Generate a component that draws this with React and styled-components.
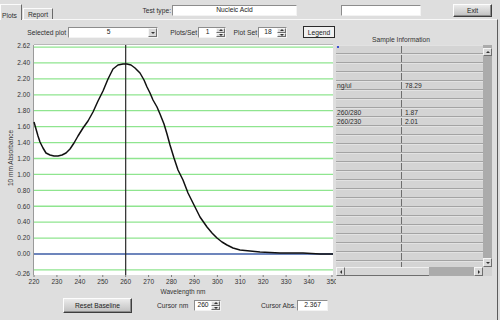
import React from 'react';
import styled, { createGlobalStyle } from 'styled-components';

const GlobalStyle = createGlobalStyle`
  html, body { margin: 0; padding: 0; background: #dedede; }
  body {
    font-family: "Liberation Sans", Arial, sans-serif;
    font-size: 6.7px;
    color: #2e2e2e;
  }
`;

const Window = styled.div`
  width: 500px;
  height: 320px;
  display: flex;
  flex-direction: column;
  overflow: hidden;
  background: #dedede;
`;

const TopBar = styled.div`
  height: 19px;
  flex-shrink: 0;
  display: flex;
  align-items: flex-start;
  position: relative;
  z-index: 1;
`;

const Tabs = styled.div`
  display: flex;
  align-items: flex-end;
  height: 20px;
`;

const Tab = styled.div`
  box-sizing: border-box;
  width: ${p => p.$w}px;
  height: ${p => (p.$active ? 16 : 11)}px;
  margin-bottom: ${p => (p.$active ? 0 : 1)}px;
  margin-left: ${p => (p.$active ? 0 : 1)}px;
  border: 1px solid;
  border-color: #fbfbfb #6a6a6a transparent #fbfbfb;
  border-bottom: none;
  background: #dedede;
  display: flex;
  align-items: center;
  justify-content: ${p => (p.$active ? 'flex-start' : 'center')};
  padding-top: ${p => (p.$active ? 5 : 1)}px;
  padding-left: ${p => (p.$active ? 1 : 0)}px;
`;

const Label = styled.span`
  display: inline-block;
  width: ${p => (p.$w ? `${p.$w}px` : 'auto')};
  text-align: ${p => p.$align || 'left'};
  margin-left: ${p => p.$ml || 0}px;
  margin-right: ${p => p.$mr || 0}px;
  margin-top: ${p => p.$mt || 0}px;
  white-space: nowrap;
  line-height: 11px;
`;

const Field = styled.div`
  box-sizing: border-box;
  width: ${p => p.$w}px;
  height: 11px;
  margin-left: ${p => p.$ml || 0}px;
  margin-top: ${p => p.$mt || 0}px;
  background: #fff;
  border: 1px solid;
  border-color: #8c8c8c #f3f3f3 #f3f3f3 #8c8c8c;
  display: flex;
  align-items: stretch;
  flex-shrink: 0;
`;

const FieldText = styled.span`
  flex: 1;
  display: flex;
  align-items: center;
  justify-content: ${p => p.$align || 'center'};
  padding-left: ${p => p.$pl || 0}px;
  line-height: 1;
  color: #222;
`;

const tri = {
  up: 'border-left:2px solid transparent;border-right:2px solid transparent;border-bottom:2px solid #333;',
  down: 'border-left:2px solid transparent;border-right:2px solid transparent;border-top:2px solid #333;',
  left: 'border-top:2px solid transparent;border-bottom:2px solid transparent;border-right:2px solid #333;',
  right: 'border-top:2px solid transparent;border-bottom:2px solid transparent;border-left:2px solid #333;',
};

const Tri = styled.span`
  width: 0;
  height: 0;
  ${p => tri[p.$dir]}
`;

const SmallBtn = styled.div`
  box-sizing: border-box;
  width: ${p => p.$w || 9}px;
  height: ${p => p.$h || '100%'};
  background: #d9d9d9;
  border: 1px solid;
  border-color: #f6f6f6 #6e6e6e #6e6e6e #f6f6f6;
  display: flex;
  align-items: center;
  justify-content: center;
  flex-shrink: 0;
`;

const SpinCol = styled.div`
  display: flex;
  flex-direction: column;
  width: 9px;
`;

const PushButton = styled.div`
  box-sizing: border-box;
  width: ${p => p.$w}px;
  height: ${p => p.$h}px;
  margin-left: ${p => p.$ml || 0}px;
  margin-top: ${p => p.$mt || 0}px;
  background: linear-gradient(#ebebeb, #c0c0c0);
  border: 1px solid;
  border-color: #fdfdfd #3e3e3e #3e3e3e #fdfdfd;
  box-shadow: inset -1px -1px 0 #8c8c8c;
  display: flex;
  align-items: center;
  justify-content: center;
  color: #222;
  flex-shrink: 0;
`;

const LegendButton = styled.div`
  box-sizing: border-box;
  width: 32px;
  height: 12px;
  margin-left: 16px;
  margin-top: -1px;
  border: 1px solid #2a2a2a;
  background: #f1f1f1;
  display: flex;
  align-items: center;
  justify-content: center;
  color: #222;
`;

const Panel = styled.div`
  flex: 1;
  width: 498px;
  box-sizing: border-box;
  border-top: 1px solid #f8f8f8;
  border-right: 1px solid #5c5c5c;
  display: flex;
  flex-direction: column;
`;

const ControlRow = styled.div`
  height: 18px;
  box-sizing: border-box;
  padding: 7px 0 0 26px;
  display: flex;
  align-items: flex-start;
`;

const Main = styled.div`
  height: 258px;
  display: flex;
`;

const Side = styled.div`
  width: 157px;
  display: flex;
  flex-direction: column;
`;

const SideHeader = styled.div`
  height: 7px;
  line-height: 4px;
  text-align: center;
  padding-right: 27px;
  color: #333;
`;

const Table = styled.div`
  display: grid;
  grid-template-columns: 147px 9px;
  grid-template-rows: 222px 9px;
`;

const Rows = styled.div`
  overflow: hidden;
  background: #d4d4d4;
  position: relative;
`;

const Row = styled.div`
  display: grid;
  grid-template-columns: 66px 81px;
  height: 9px;
  box-sizing: border-box;
  border-bottom: 1px solid #a3a3a3;
  border-top: 1px solid #e2e2e2;
`;

const Cell = styled.div`
  padding-left: ${p => p.$pl}px;
  line-height: 7px;
  border-right: ${p => (p.$divider ? '1px solid #6e6e6e' : 'none')};
  color: #2a2a2a;
  white-space: nowrap;
`;

const Marker = styled.span`
  position: absolute;
  left: 1px;
  top: 1px;
  width: 2px;
  height: 2px;
  background: #3b4fd0;
`;

const VScroll = styled.div`
  background: #ababab;
  display: flex;
  flex-direction: column;
  justify-content: space-between;
  padding-top: 3px;
`;

const HScroll = styled.div`
  display: grid;
  grid-template-columns: 9px 84px 1fr 9px;
  background: #ababab;
`;

const Thumb = styled.div`
  background: #d6d6d6;
  border-bottom: 1px solid #6e6e6e;
  border-top: 1px solid #f0f0f0;
  box-sizing: border-box;
`;

const Corner = styled.div`
  background: #d2d2d2;
`;

const BottomRow = styled.div`
  height: 24px;
  box-sizing: border-box;
  padding-top: 2px;
  display: flex;
  align-items: flex-start;
`;

const PX = 34;
const PR = 333;
const TOP = 7;
const BOT = 237;
const xOf = nm => PX + (nm - 220) * 2.292;
const yOf = v => 216 - v * 79.6;

// absorbance trace, in chart pixels
const trace = [
  [34, 84], [36, 91], [38, 98], [40, 104], [43, 110], [46, 115], [50, 117], [54, 118],
  [58, 118], [62, 117], [66, 115], [70, 111], [74, 105], [78, 98], [83, 90], [88, 83],
  [93, 74], [98, 63], [103, 53], [108, 41], [113, 31], [118, 27], [123, 26], [127, 26],
  [131, 27], [135, 30], [140, 35], [144, 42], [147, 49], [150, 55], [153, 62], [157, 69],
  [160, 76], [164, 86], [167, 96], [170, 107], [174, 120], [178, 132], [183, 142],
  [188, 155], [193, 165], [200, 179], [207, 189], [212, 195], [217, 200], [222, 204],
  [227, 207], [233, 210], [240, 212], [250, 213], [260, 214], [280, 215], [303, 215],
  [320, 216], [333, 216],
];

const gridValues = [2.6, 2.4, 2.2, 2.0, 1.8, 1.6, 1.4, 1.2, 1.0, 0.8, 0.6, 0.4, 0.2, -0.2];
const yLabels = [
  ['2.62', TOP + 1], ['2.40', yOf(2.4)], ['2.20', yOf(2.2)], ['2.00', yOf(2.0)],
  ['1.80', yOf(1.8)], ['1.60', yOf(1.6)], ['1.40', yOf(1.4)], ['1.20', yOf(1.2)],
  ['1.00', yOf(1.0)], ['0.80', yOf(0.8)], ['0.60', yOf(0.6)], ['0.40', yOf(0.4)],
  ['0.20', yOf(0.2)], ['0.00', yOf(0)], ['-0.26', BOT - 1],
];
const xTicks = Array.from({ length: 14 }, (_, i) => 220 + i * 10);

function Chart() {
  return (
    <svg width="336" height="258" viewBox="0 0 336 258" style={{ display: 'block', flexShrink: 0 }}>
      <rect x={PX} y={TOP} width={PR - PX} height={BOT - TOP} fill="#fff" />
      <line x1={PX} y1={TOP - 0.5} x2={PR} y2={TOP - 0.5} stroke="#b8b8b8" />
      <line x1={PX - 0.5} y1={TOP} x2={PX - 0.5} y2={BOT} stroke="#9a9a9a" />
      {gridValues.map(v => (
        <line key={v} x1={PX} x2={PR} y1={yOf(v)} y2={yOf(v)} stroke="#8fe58f" strokeWidth="1.3" />
      ))}
      <line x1={PX} x2={PR} y1={yOf(0)} y2={yOf(0)} stroke="#3d5ca6" strokeWidth="1.3" />
      <line x1={xOf(260)} x2={xOf(260)} y1={TOP} y2={BOT} stroke="#2a2a2a" strokeWidth="1.2" />
      <polyline
        points={trace.map(p => p.join(',')).join(' ')}
        fill="none"
        stroke="#111"
        strokeWidth="1.5"
        strokeLinejoin="round"
      />
      <g fontFamily='"Liberation Sans", Arial, sans-serif' fontSize="6.5" fill="#333">
        {yLabels.map(([t, y]) => (
          <text key={t} x="30" y={y + 2.3} textAnchor="end">{t}</text>
        ))}
        {xTicks.map(nm => (
          <g key={nm}>
            <line x1={xOf(nm)} x2={xOf(nm)} y1={BOT} y2={BOT + 2} stroke="#555" strokeWidth="0.7" />
            <text x={xOf(nm)} y={BOT + 9} textAnchor="middle">{nm}</text>
          </g>
        ))}
        <text x="183" y="256" textAnchor="middle">Wavelength nm</text>
        <text x="13" y="120" textAnchor="middle" transform="rotate(-90 13 120)">10 mm Absorbance</text>
      </g>
    </svg>
  );
}

const sampleData = {
  4: ['ng/ul', '78.29'],
  7: ['260/280', '1.87'],
  8: ['260/230', '2.01'],
};

function SampleTable() {
  return (
    <Table>
      <Rows>
        {Array.from({ length: 25 }, (_, i) => (
          <Row key={i}>
            <Cell $pl={1} $divider>{sampleData[i] ? sampleData[i][0] : ''}</Cell>
            <Cell $pl={3}>{sampleData[i] ? sampleData[i][1] : ''}</Cell>
          </Row>
        ))}
        <Marker />
      </Rows>
      <VScroll>
        <SmallBtn $h="8px"><Tri $dir="up" /></SmallBtn>
        <SmallBtn $h="9px"><Tri $dir="down" /></SmallBtn>
      </VScroll>
      <HScroll>
        <SmallBtn><Tri $dir="left" /></SmallBtn>
        <Thumb />
        <span />
        <SmallBtn><Tri $dir="right" /></SmallBtn>
      </HScroll>
      <Corner />
    </Table>
  );
}

function Spinner({ value, w, ml, mt }) {
  return (
    <Field $w={w} $ml={ml} $mt={mt}>
      <FieldText>{value}</FieldText>
      <SpinCol>
        <SmallBtn $h="50%"><Tri $dir="up" /></SmallBtn>
        <SmallBtn $h="50%"><Tri $dir="down" /></SmallBtn>
      </SpinCol>
    </Field>
  );
}

export default function App() {
  return (
    <>
      <GlobalStyle />
      <Window>
        <TopBar>
          <Tabs>
            <Tab $active $w={22}>Plots</Tab>
            <Tab $w={30}>Report</Tab>
          </Tabs>
          <Label $w={29} $align="right" $ml={89} $mr={1} $mt={5}>Test type:</Label>
          <Field $w={125} $mt={5}>
            <FieldText>Nucleic Acid</FieldText>
          </Field>
          <Field $w={80} $ml={44} $mt={5} />
          <PushButton $w={39} $h={13} $ml={32} $mt={4}>Exit</PushButton>
        </TopBar>
        <Panel>
          <ControlRow>
            <Label $w={40} $align="right" $mr={2}>Selected plot</Label>
            <Field $w={90}>
              <FieldText>5</FieldText>
              <SmallBtn><Tri $dir="down" /></SmallBtn>
            </Field>
            <Label $w={29} $align="right" $ml={10} $mr={1}>Plots/Set</Label>
            <Spinner value="1" w={28} />
            <Label $w={25} $align="right" $ml={6} $mr={1}>Plot Set</Label>
            <Spinner value="18" w={29} />
            <LegendButton>Legend</LegendButton>
          </ControlRow>
          <Main>
            <Chart />
            <Side>
              <SideHeader>Sample Information</SideHeader>
              <SampleTable />
            </Side>
          </Main>
          <BottomRow>
            <PushButton $w={69} $h={15} $ml={63}>Reset Baseline</PushButton>
            <Label $w={34} $ml={25} $mr={3} $mt={2}>Cursor nm</Label>
            <Spinner value="260" w={27} mt={2} />
            <Label $w={34} $ml={40} $mr={2} $mt={2}>Cursor Abs.</Label>
            <Field $w={31} $mt={2}>
              <FieldText>2.367</FieldText>
            </Field>
          </BottomRow>
        </Panel>
      </Window>
    </>
  );
}
